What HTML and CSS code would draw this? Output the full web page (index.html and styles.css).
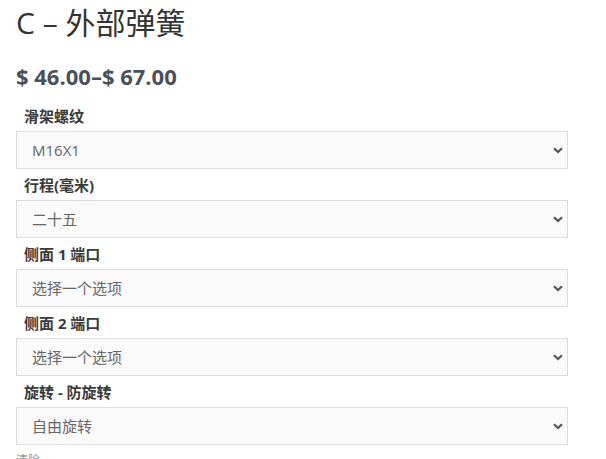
FILE: index.html
```html
<!DOCTYPE html>
<html lang="zh-CN">
<head>
<meta charset="utf-8">
<title>C – 外部弹簧</title>
<link rel="stylesheet" href="styles.css">
</head>
<body>
<div class="product">
  <h1 class="product-title">C – 外部弹簧</h1>
  <p class="price">$ 46.00–$ 67.00</p>
  <form class="variations">
    <div class="field">
      <label class="field-label" for="thread">滑架螺纹</label>
      <div class="select-wrap">
        <select id="thread" class="field-select"><option>M16X1</option></select>
        <svg class="chevron" viewBox="0 0 10 7" width="10" height="7"><path d="M1 1.2 L5 5 L9 1.2" fill="none" stroke="#555" stroke-width="2.2"/></svg>
      </div>
    </div>
    <div class="field">
      <label class="field-label" for="stroke">行程(毫米)</label>
      <div class="select-wrap">
        <select id="stroke" class="field-select"><option>二十五</option></select>
        <svg class="chevron" viewBox="0 0 10 7" width="10" height="7"><path d="M1 1.2 L5 5 L9 1.2" fill="none" stroke="#555" stroke-width="2.2"/></svg>
      </div>
    </div>
    <div class="field">
      <label class="field-label" for="port1">侧面 1 端口</label>
      <div class="select-wrap">
        <select id="port1" class="field-select"><option>选择一个选项</option></select>
        <svg class="chevron" viewBox="0 0 10 7" width="10" height="7"><path d="M1 1.2 L5 5 L9 1.2" fill="none" stroke="#555" stroke-width="2.2"/></svg>
      </div>
    </div>
    <div class="field">
      <label class="field-label" for="port2">侧面 2 端口</label>
      <div class="select-wrap">
        <select id="port2" class="field-select"><option>选择一个选项</option></select>
        <svg class="chevron" viewBox="0 0 10 7" width="10" height="7"><path d="M1 1.2 L5 5 L9 1.2" fill="none" stroke="#555" stroke-width="2.2"/></svg>
      </div>
    </div>
    <div class="field">
      <label class="field-label" for="rotation">旋转 - 防旋转</label>
      <div class="select-wrap">
        <select id="rotation" class="field-select"><option>自由旋转</option></select>
        <svg class="chevron" viewBox="0 0 10 7" width="10" height="7"><path d="M1 1.2 L5 5 L9 1.2" fill="none" stroke="#555" stroke-width="2.2"/></svg>
      </div>
    </div>
    <a class="reset" href="#">清除</a>
  </form>
</div>
</body>
</html>
```
FILE: styles.css
```css
html, body {
  margin: 0;
  padding: 0;
  background: #fff;
}

body {
  font-family: "Open Sans", "Noto Sans CJK SC", sans-serif;
  color: #333;
}

.product {
  width: 552px;
  padding: 3px 0 0 16px;
}

.product-title {
  margin: 0;
  font-size: 30px;
  font-weight: 400;
  line-height: 40px;
  color: #333;
}

.price {
  margin: 18px 0 15px;
  font-size: 22px;
  font-weight: 700;
  line-height: 30px;
  color: #4b4f58;
}

.variations {
  display: flex;
  flex-direction: column;
}

.field {
  display: flex;
  flex-direction: column;
  margin-bottom: 6px;
}

.field-label {
  padding-left: 8px;
  margin-bottom: 5px;
  font-size: 15px;
  font-weight: 700;
  line-height: 20px;
  color: #3a3a3a;
}

.select-wrap {
  position: relative;
}

.field-select {
  display: block;
  width: 552px;
  height: 38px;
  margin: 0;
  padding: 0 40px 0 15px;
  border: 1px solid #ddd;
  border-radius: 0;
  background: #fafafa;
  font-family: "Open Sans", "Noto Sans CJK SC", sans-serif;
  font-size: 15px;
  color: #666;
  appearance: none;
  -webkit-appearance: none;
}

.chevron {
  position: absolute;
  right: 5px;
  top: 16px;
}

.reset {
  margin-top: 2px;
  font-size: 12px;
  line-height: 16px;
  color: #999;
  text-decoration: none;
}
```
